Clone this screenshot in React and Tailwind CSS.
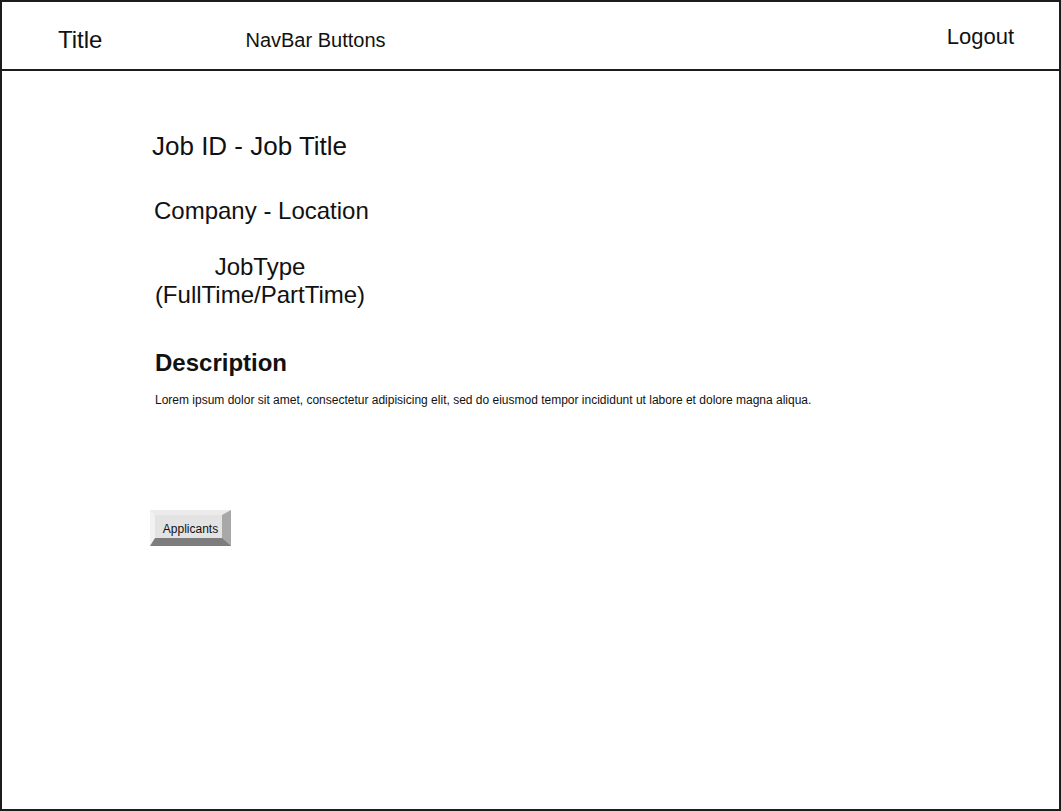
export default function App() {
  return (
    <div
      className="w-[1061px] h-[811px] bg-white border-2 border-[#1c1c1c] text-[#111] overflow-hidden"
      style={{ fontFamily: "'Liberation Sans', Arial, sans-serif" }}
    >
      {/* Header */}
      <div className="h-[69px] border-b-2 border-[#1c1c1c] flex items-center pl-[56px] pr-[45px]">
        <span className="text-[24px] leading-[28px] mt-[8px]">Title</span>
        <span className="text-[20px] leading-[24px] ml-[143px] mt-[8px]">NavBar Buttons</span>
        <span className="ml-auto text-[22px] leading-[26px] mt-[2px]">Logout</span>
      </div>

      {/* Job detail */}
      <div className="flex flex-col items-start pl-[150px]">
        <h1 className="text-[26px] leading-[30px] mt-[60px]">Job ID - Job Title</h1>
        <p className="text-[24px] leading-[28px] mt-[36px] ml-[2px]">Company - Location</p>
        <p className="text-[24px] leading-[28px] mt-[28px] ml-[2px] w-[212px] text-center">
          JobType
          <br />
          (FullTime/PartTime)
        </p>
        <h2 className="text-[24px] leading-[28px] font-bold mt-[40px] ml-[3px]">Description</h2>
        <p className="text-[12px] leading-[14px] mt-[16px] ml-[3px]">
          Lorem ipsum dolor sit amet, consectetur adipisicing elit, sed do eiusmod tempor incididunt ut labore et dolore magna aliqua.
        </p>
        <button className="mt-[103px] -ml-[2px] w-[81px] h-[36px] bg-[#e3e3e3] border-solid border-t-[5px] border-l-[5px] border-b-[8px] border-r-[9px] border-t-[#ebebeb] border-l-[#f1f1f1] border-b-[#7d7d7d] border-r-[#a8a8a8] text-[12px] leading-[14px] text-[#111] flex items-center justify-center pt-[4px] pl-[4px]">
          Applicants
        </button>
      </div>
    </div>
  );
}
